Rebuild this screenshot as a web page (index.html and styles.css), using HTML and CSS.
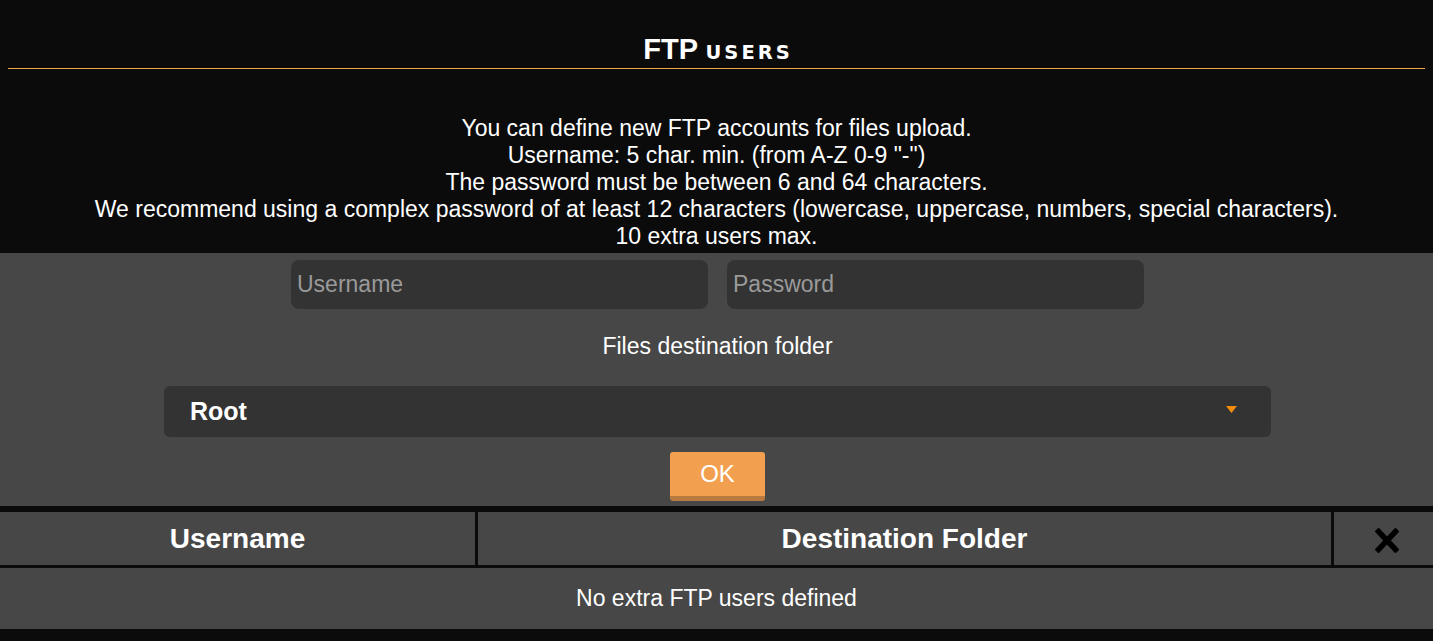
FILE: index.html
```html
<!DOCTYPE html>
<html lang="en">
<head>
    <meta charset="UTF-8">
    <meta name="viewport" content="width=device-width, initial-scale=1.0">
    <title>FTP users</title>
    <link rel="stylesheet" href="styles.css">
</head>
<body>
    <h2 class="page-title">FTP <span class="caps">USERS</span></h2>

    <div class="intro">
        You can define new FTP accounts for files upload.<br>
        Username: 5 char. min. (from A-Z 0-9 "-")<br>
        The password must be between 6 and 64 characters.<br>
        We recommend using a complex password of at least 12 characters (lowercase, uppercase, numbers, special characters).<br>
        10 extra users max.
    </div>

    <form class="add-user" id="addUserForm">
        <div class="credentials">
            <input type="text" class="field" placeholder="Username">
            <input type="password" class="field" placeholder="Password">
        </div>

        <div class="folder-label">Files destination folder</div>

        <div class="folder-select">
            <span class="folder-value">Root</span>
            <svg class="select-arrow" width="11" height="7" viewBox="0 0 11 7">
                <path d="M0 0 H11 L5.5 7 Z" fill="#f28c0f"/>
            </svg>
        </div>

        <button type="submit" class="btn-ok">OK</button>
    </form>

    <div class="users-table">
        <div class="th">Username</div>
        <div class="th">Destination Folder</div>
        <div class="th th-icon">
            <svg width="24" height="25" viewBox="0 0 24 25">
                <path d="M3.5 3.5 L20.5 21.5 M20.5 3.5 L3.5 21.5" stroke="#000" stroke-width="5.5" stroke-linecap="square"/>
            </svg>
        </div>
        <div class="empty-row">No extra FTP users defined</div>
    </div>

    <script>
        document.getElementById('addUserForm').addEventListener('submit', function(e) {
            e.preventDefault();
        });
    </script>
</body>
</html>
```

FILE: styles.css
```css
body {
    font-family: 'Liberation Sans', Arial, sans-serif;
    background-color: #0b0b0b;
    margin: 0;
    padding: 0;
    color: #fff;
}

.page-title {
    margin: 0 8px;
    height: 34px;
    padding: 32px 0 2px;
    border-bottom: 1px solid #f0a848;
    text-align: center;
    font-size: 29px;
    line-height: 34px;
    font-weight: bold;
}

.page-title .caps {
    font-family: 'DejaVu Sans', sans-serif;
    font-size: 19.5px;
    line-height: 20px;
    letter-spacing: 3px;
    margin-right: -3px;
}

.intro {
    margin-top: 46px;
    padding-bottom: 3px;
    text-align: center;
    font-size: 23px;
    line-height: 27px;
}

.add-user {
    background-color: #474747;
    padding: 7px 0 5px 2px;
    margin: 0;
    display: flex;
    flex-direction: column;
    align-items: center;
}

.credentials {
    display: flex;
    gap: 19px;
}

.field {
    width: 417px;
    height: 49px;
    box-sizing: border-box;
    padding: 0 6px;
    border: none;
    border-radius: 8px;
    background-color: #333;
    color: #fff;
    font-family: inherit;
    font-size: 23px;
    outline: none;
}

.field::placeholder {
    color: #9a9a9a;
}

.folder-label {
    margin-top: 26px;
    font-size: 23px;
    line-height: 23px;
}

.folder-select {
    margin-top: 28px;
    width: 1107px;
    height: 51px;
    box-sizing: border-box;
    padding: 0 34px 0 26px;
    border-radius: 6px;
    background-color: #333;
    display: flex;
    align-items: center;
    justify-content: space-between;
}

.folder-value {
    font-size: 25px;
    font-weight: bold;
}

.select-arrow {
    margin-top: -4px;
}

.btn-ok {
    margin-top: 15px;
    width: 95px;
    height: 49px;
    border: none;
    border-bottom: 5px solid #b87a3e;
    border-radius: 3px;
    background-color: #f2a04f;
    color: #fff;
    font-family: inherit;
    font-size: 24px;
    padding: 0;
    cursor: pointer;
}

.users-table {
    margin-top: 6px;
    display: grid;
    grid-template-columns: 475px 1fr 99px;
    column-gap: 3px;
    row-gap: 3px;
}

.th {
    background-color: #474747;
    height: 53px;
    display: flex;
    align-items: center;
    justify-content: center;
    font-size: 28px;
    font-weight: bold;
}

.th-icon svg {
    margin: 4px 0 0 6px;
}

.empty-row {
    grid-column: 1 / -1;
    background-color: #474747;
    height: 61px;
    display: flex;
    align-items: center;
    justify-content: center;
    font-size: 23px;
}
```
